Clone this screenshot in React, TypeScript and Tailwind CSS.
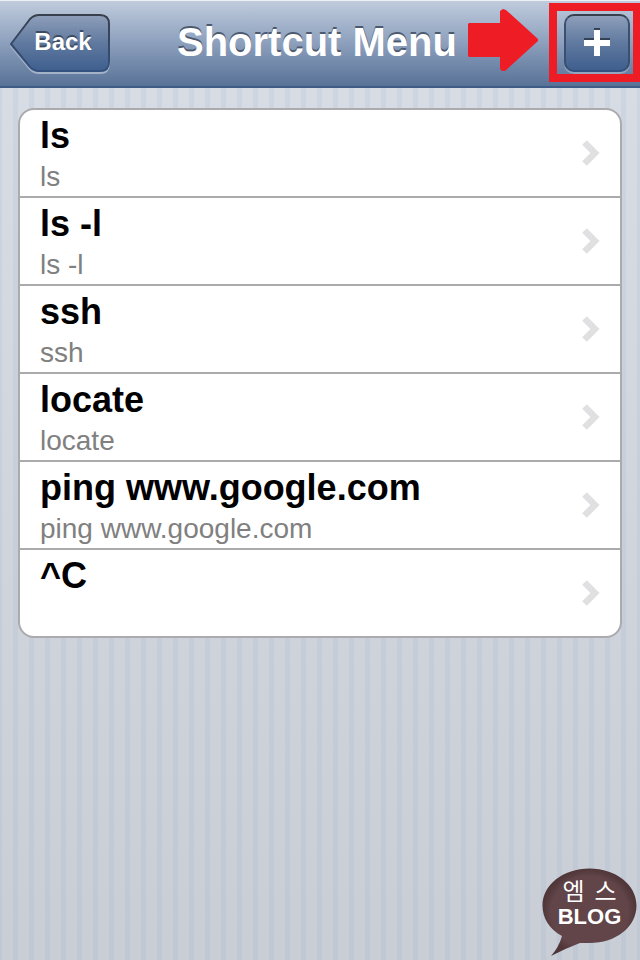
type Shortcut = {
  title: string;
  command: string;
};

const shortcuts: Shortcut[] = [
  { title: "ls", command: "ls" },
  { title: "ls -l", command: "ls -l" },
  { title: "ssh", command: "ssh" },
  { title: "locate", command: "locate" },
  { title: "ping www.google.com", command: "ping www.google.com" },
  { title: "^C", command: "" },
];

function BackButton() {
  return (
    <button
      type="button"
      className="relative h-[60px] w-[100px] pb-1 pl-1.5 text-[24px] leading-[28px] font-bold text-white [text-shadow:0_-2px_0_#3d4b61]"
    >
      <svg
        className="absolute inset-0 h-full w-full"
        viewBox="0 0 100 60"
        fill="none"
        aria-hidden="true"
      >
        <defs>
          <linearGradient id="back-fill" x1="0" y1="0" x2="0" y2="1">
            <stop offset="0" stopColor="#8e9fba" />
            <stop offset="0.5" stopColor="#60799f" />
            <stop offset="1" stopColor="#3f5f8e" />
          </linearGradient>
          <linearGradient id="back-edge" x1="0" y1="0" x2="0" y2="1">
            <stop offset="0" stopColor="#383f4d" />
            <stop offset="1" stopColor="#34527f" />
          </linearGradient>
        </defs>
        <path
          d="M1 32 L20 7 Q24 3 29 3 H90 Q99 3 99 12 V50 Q99 59 90 59 H29 Q24 59 20 55 Z"
          stroke="#a5b3c8"
          strokeWidth="2"
        />
        <path
          d="M1 30 L20 5 Q24 1 29 1 H90 Q99 1 99 10 V48 Q99 57 90 57 H29 Q24 57 20 53 Z"
          fill="url(#back-fill)"
          stroke="url(#back-edge)"
          strokeWidth="2"
          strokeLinejoin="round"
        />
      </svg>
      <span className="relative">Back</span>
    </button>
  );
}

function AddButton() {
  return (
    <button
      type="button"
      aria-label="Add shortcut"
      className="flex h-[58px] w-[66px] items-center justify-center rounded-[10px] border-2 border-t-[#383f4d] border-r-[#3b4f70] border-b-[#34527f] border-l-[#3b4f70] bg-linear-to-b from-[#8e9fba] via-[#60799f] to-[#3f5f8e] pb-0.5 shadow-[0_2px_0_#94a5bf]"
    >
      <svg width="26" height="28" viewBox="0 0 26 28" aria-hidden="true">
        <path d="M10 0h6v10h10v6H16v10h-6V16H0v-6h10z" fill="#344154" />
        <path d="M10 2h6v10h10v6H16v10h-6V18H0v-6h10z" fill="#fff" />
      </svg>
    </button>
  );
}

function ShortcutRow({ title, command }: Shortcut) {
  return (
    <li className="border-b-2 border-[#ababad] last:border-b-0">
      <a href="#" className="flex h-[86px] items-center justify-between pr-5 pl-5">
        <span className="flex h-full flex-col pt-1">
          <span className="text-[36px] leading-[44px] font-bold text-black">
            {title}
          </span>
          <span className="text-[28px] leading-[38px] text-[#808080]">
            {command}
          </span>
        </span>
        <svg width="18" height="26" viewBox="0 0 18 26" fill="none" aria-hidden="true">
          <path d="M2.500 2.500 L13 13 L2.500 23.500" stroke="#e0e0e2" strokeWidth="6.500" />
        </svg>
      </a>
    </li>
  );
}

function BlogBadge() {
  return (
    <div className="absolute right-[3px] bottom-[4px] h-[88px] w-[95px] pt-2 text-center text-white">
      <svg
        className="absolute inset-0"
        width="95"
        height="88"
        viewBox="0 0 95 88"
        aria-hidden="true"
      >
        <defs>
          <radialGradient id="badge-fill">
            <stop offset="0.82" stopColor="#614549" />
            <stop offset="1" stopColor="#503638" />
          </radialGradient>
        </defs>
        <path
          d="M47.500 0.500 C74 0.500 94.500 17 94.500 37.500 C94.500 59 74 75 47.500 75 L38 75 Q22 81 9 88 Q17 79 20 68 C7 61 0.500 50 0.500 37.500 C0.500 17 21 0.500 47.500 0.500 Z"
          fill="url(#badge-fill)"
        />
      </svg>
      <p className="relative flex justify-center gap-2.5 font-['Noto_Sans_CJK_KR',sans-serif] text-[24px] leading-[28px]">
        <span>엠</span>
        <span>스</span>
      </p>
      <p className="relative text-[22px] leading-[26px] font-bold">BLOG</p>
    </div>
  );
}

export default function App() {
  return (
    <div className="relative min-h-screen overflow-hidden bg-[repeating-linear-gradient(90deg,#7f9cc41a_0_2px,transparent_2px_13px,#7f9cc41a_13px_16px),linear-gradient(#d8dde6,#c8cdd6)] font-['Liberation_Sans',Arial,sans-serif]">
      <header className="relative grid h-[88px] grid-cols-[1fr_auto_1fr] items-start border-t border-b-2 border-t-[#edf1f5] border-b-[#3f5c87] bg-linear-to-b from-[#c0ccdd] via-[#8c9fbc] to-[#587297] px-2.5 pt-[13px]">
        <BackButton />
        <h1 className="pt-1 pr-1.5 text-[40px] leading-[48px] font-bold text-white [text-shadow:0_-2px_0_#4c5a70]">
          Shortcut Menu
        </h1>
        <div className="flex justify-end">
          <AddButton />
        </div>

        {/* Callout pointing at the add button */}
        <svg
          className="absolute top-[8px] right-[102px]"
          width="70"
          height="63"
          viewBox="0 0 70 63"
          aria-hidden="true"
        >
          <path
            d="M1 14 H32 V2 L35 0 L38 1 L70 30 V32 L37 62 H34 L32 60 V48 H1 L0 47 V15 Z"
            fill="#ee1c24"
          />
        </svg>
        <div className="pointer-events-none absolute top-[2px] -right-px h-[79px] w-[92px] border-8 border-[#ee1c24]" />
      </header>

      <main className="px-[18px] py-5">
        <ul className="overflow-hidden rounded-[16px] border-2 border-[#ababad] bg-white">
          {shortcuts.map((shortcut) => (
            <ShortcutRow key={shortcut.title} {...shortcut} />
          ))}
        </ul>
      </main>

      <BlogBadge />
    </div>
  );
}
